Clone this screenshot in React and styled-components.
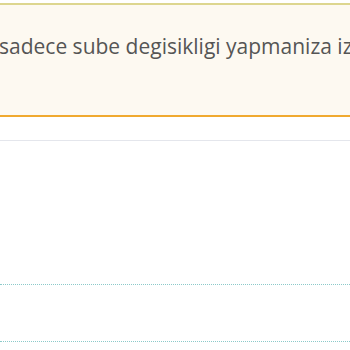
import React from "react";
import styled, { createGlobalStyle } from "styled-components";

const Global = createGlobalStyle`
  html, body {
    margin: 0;
    padding: 0;
    background: #ffffff;
    font-family: "Open Sans", "Noto Sans", sans-serif;
    overflow: hidden;
  }
`;

const Page = styled.div`
  width: 350px;
  height: 350px;
  padding-top: 3px;
  box-sizing: border-box;
`;

const Alert = styled.div`
  background: #fdf9f1;
  border-top: 2px solid #ddd68f;
  border-bottom: 2px solid #f0a92f;
  box-sizing: border-box;
  height: 114px;
  overflow: hidden;
  padding-top: 26px;
`;

const Message = styled.p`
  margin: 0;
  margin-left: -1px;
  white-space: nowrap;
  font-size: 21px;
  line-height: 30px;
  color: #555555;
`;

const Rule = styled.div`
  border-bottom: ${(p) => (p.$dotted ? "1px dotted #8ccaca" : "1px solid #e4e6ec")};
  margin-top: ${(p) => p.$gap}px;
`;

export default function App() {
  return (
    <Page>
      <Global />
      <Alert>
        <Message>sadece sube degisikligi yapmaniza izin verilmektedir.</Message>
      </Alert>
      <Rule $gap={23} />
      <Rule $dotted $gap={143} />
      <Rule $dotted $gap={56} />
    </Page>
  );
}
